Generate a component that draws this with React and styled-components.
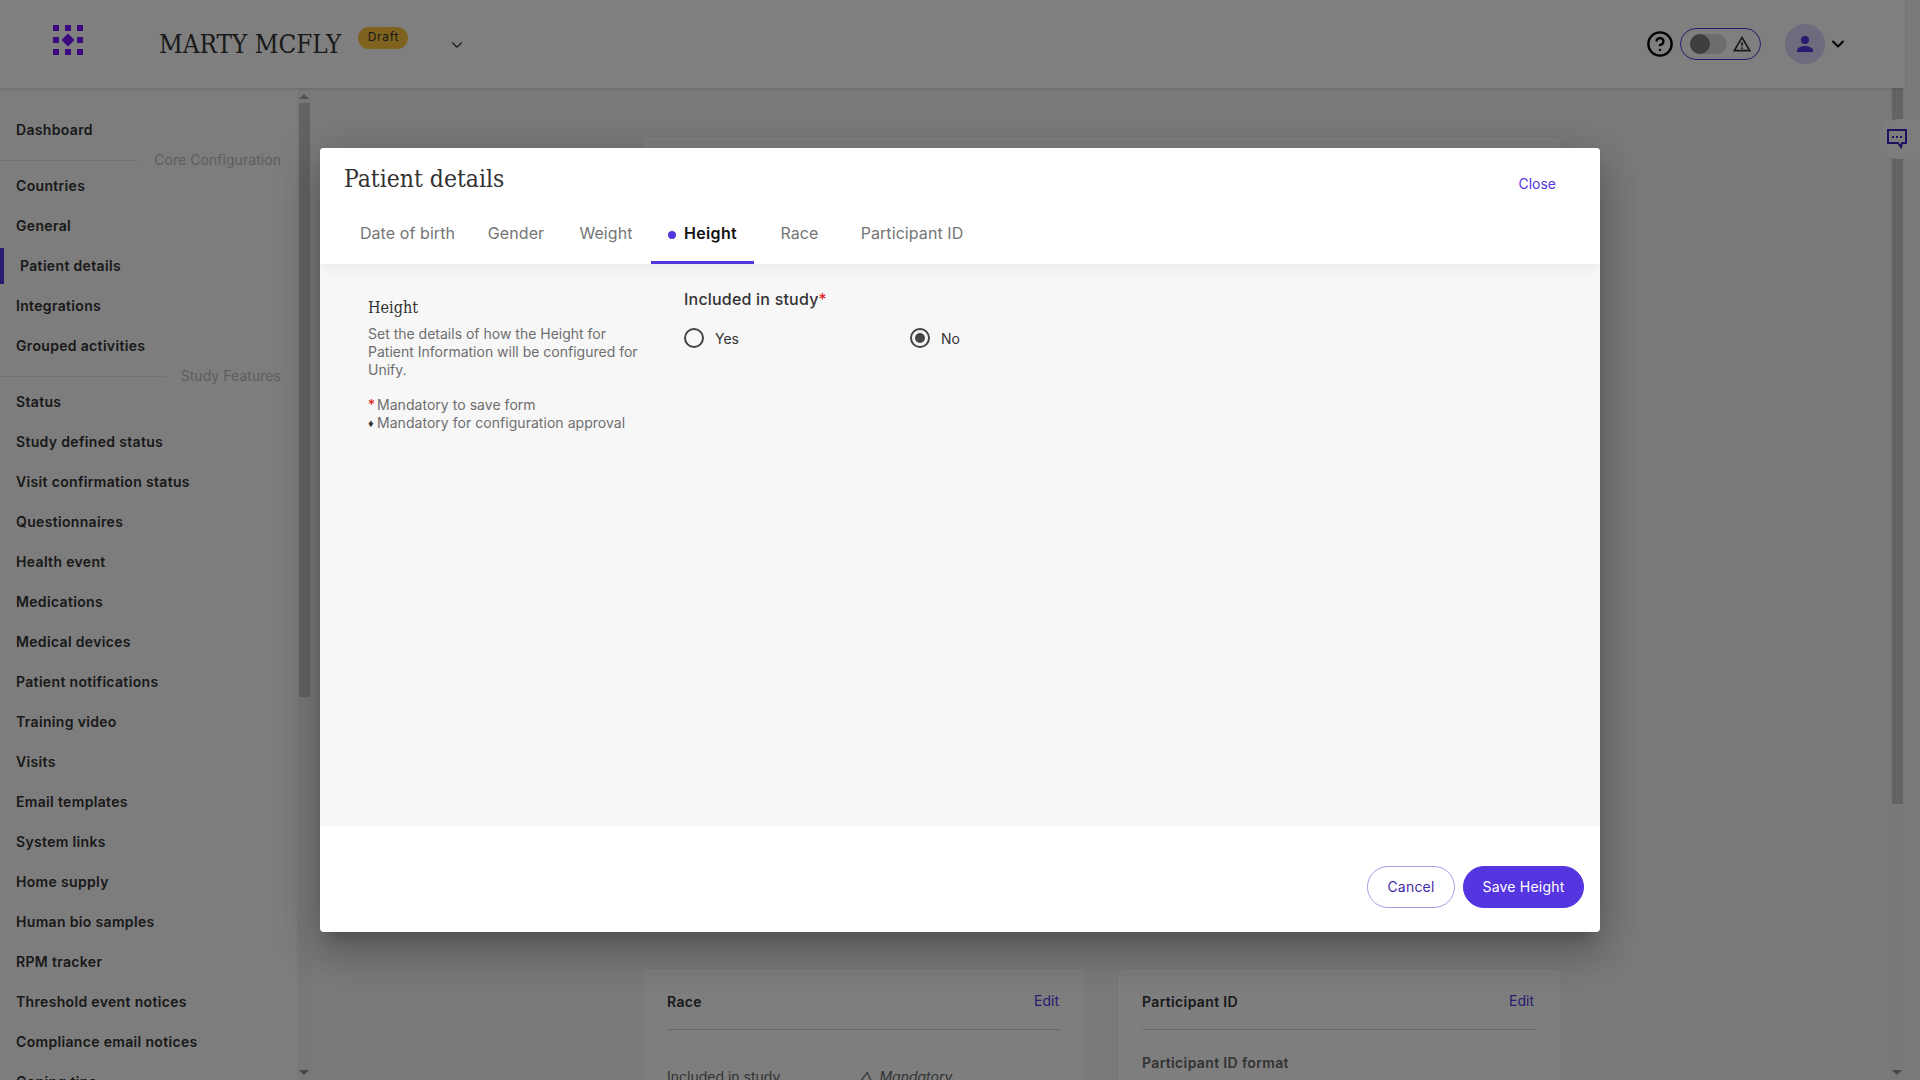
import React from 'react';
import styled, { createGlobalStyle } from 'styled-components';
import { ChevronDown, CircleHelp } from 'lucide-react';
import { MdOutlineWarningAmber } from 'react-icons/md';

const SANS = `Inter, "Liberation Sans", sans-serif`;
const SLAB = `"DejaVu Serif Condensed", "DejaVu Serif", serif`;
const ACCENT = '#5535e0';

const GlobalStyle = createGlobalStyle`
  html, body {
    margin: 0;
    padding: 0;
    height: 100%;
    overflow: hidden;
    font-family: ${SANS};
    color: #333;
  }
`;

const Page = styled.div`
  position: relative;
  width: 1920px;
  height: 1080px;
  overflow: hidden;
  background: #f5f5f5;
`;

const Frame = styled.div`
  width: 1905px;
  height: 100%;
  display: flex;
  flex-direction: column;
`;

const Header = styled.header`
  flex: 0 0 88px;
  display: flex;
  align-items: center;
  background: #fff;
  box-shadow: 0 1px 3px rgba(0, 0, 0, 0.12);
  padding: 0 57px 0 53px;
  box-sizing: border-box;
  position: relative;
  z-index: 1;
`;

const Logo = styled.svg`
  width: 30px;
  height: 30px;
  margin-top: -8px;
  flex: none;
`;

const StudyName = styled.h1`
  margin: 0 0 0 76px;
  font: 400 25.8px ${SLAB};
  color: #333;
  white-space: nowrap;
`;

const Badge = styled.span`
  margin: -12px 0 0 17px;
  width: 50px;
  height: 22px;
  border-radius: 11px;
  background: #ffc53d;
  font-size: 12px;
  line-height: 20px;
  letter-spacing: 0.7px;
  text-align: center;
  color: #333;
`;

const StudyChevron = styled(ChevronDown)`
  margin: 2px 0 0 40px;
  color: #333;
`;

const HeaderRight = styled.div`
  margin-left: auto;
  display: flex;
  align-items: center;
`;

const Pill = styled.div`
  margin-left: 6px;
  width: 81px;
  height: 32px;
  box-sizing: border-box;
  border: 1px solid ${ACCENT};
  border-radius: 16px;
  padding: 0 8px 0 9px;
  display: flex;
  align-items: center;
  justify-content: space-between;
`;

const Track = styled.div`
  width: 37px;
  height: 20px;
  border-radius: 10px;
  background: #d8dcd8;
  display: flex;
`;

const Knob = styled.div`
  width: 20px;
  height: 20px;
  border-radius: 50%;
  background: #7c7c7c;
`;

const Avatar = styled.div`
  margin-left: 24px;
  width: 40px;
  height: 40px;
  border-radius: 50%;
  background: #ddd6ff;
  display: flex;
  align-items: center;
  justify-content: center;
`;

const AvatarChevron = styled(ChevronDown)`
  margin-left: 3px;
  color: #000;
`;

const Body = styled.div`
  flex: 1;
  min-height: 0;
  display: flex;
`;

const Sidebar = styled.nav`
  width: 297px;
  flex: none;
  padding-top: 22px;
  overflow: hidden;
  background: #fafafa;
`;

const NavItem = styled.a`
  position: relative;
  display: block;
  height: 40px;
  line-height: 40px;
  padding-left: ${(p) => (p.$active ? 20 : 16)}px;
  font-size: 14px;
  font-weight: 600;
  letter-spacing: 0.33px;
  color: #333;
  white-space: nowrap;

  ${(p) =>
    p.$active &&
    `&::before {
      content: '';
      position: absolute;
      left: 0;
      top: 2px;
      bottom: 2px;
      width: 4px;
      background: ${ACCENT};
    }`}
`;

const NavGroup = styled.div`
  display: flex;
  align-items: center;
  gap: 16px;
  height: 16px;
  margin: 2px 0 -2px;
  padding-right: 16px;
  font-size: 14px;
  line-height: 16px;
  letter-spacing: 0.05px;
  color: #bdbdbd;
  white-space: nowrap;

  &::before {
    content: '';
    flex: 1;
    height: 1px;
    background: #e4e4e4;
  }
`;

const Rail = styled.div`
  width: ${(p) => p.$width}px;
  flex: none;
  display: flex;
  flex-direction: column;
  align-items: center;
  background: #f1f1f1;
`;

const RailArrow = styled.div`
  flex: none;
  width: 0;
  height: 0;
  border-left: 5px solid transparent;
  border-right: 5px solid transparent;
  margin: ${(p) => (p.$down ? 'auto 0 5px' : '6px 0 4px')};
  ${(p) =>
    p.$down ? 'border-top: 5px solid #8c8c8c;' : 'border-bottom: 5px solid #a4a4a4;'}
`;

const RailThumb = styled.div`
  flex: none;
  width: 11px;
  height: ${(p) => p.$height}px;
  background: #c6c6c6;
`;

const Main = styled.main`
  flex: 1;
  min-width: 0;
  padding: 49px 0 0 332px;
  overflow: hidden;
`;

const Column = styled.div`
  width: 917px;
  display: flex;
  flex-direction: column;
  gap: 34px;
`;

const Card = styled.section`
  box-sizing: border-box;
  background: #fcfcfc;
  border-radius: 4px;
  box-shadow: 0 0 2px rgba(0, 0, 0, 0.12);
  padding: 24px 24px 0;
  height: ${(p) => p.$height}px;
`;

const CardRow = styled.div`
  display: grid;
  grid-template-columns: 442px 442px;
  gap: 33px;
`;

const CardHead = styled.div`
  display: flex;
  justify-content: space-between;
  border-bottom: 1px solid #d4d4d4;
  height: 36px;
`;

const CardTitle = styled.h3`
  margin: 0;
  font-size: 14px;
  line-height: 18px;
  font-weight: 600;
  letter-spacing: 0.35px;
  color: #333;
`;

const EditLink = styled.a`
  margin-right: 2px;
  font-size: 14px;
  line-height: 16px;
  color: ${ACCENT};
`;

const CardLine = styled.div`
  margin-top: ${(p) => p.$top}px;
  display: flex;
  font-size: 14px;
  line-height: 18px;
  font-weight: ${(p) => (p.$strong ? 600 : 400)};
  letter-spacing: ${(p) => (p.$strong ? 0.35 : 0)}px;
  color: #666;
`;

const CardLineValue = styled.span`
  margin-left: 79px;
  font-style: italic;
  word-spacing: 2px;
`;

const Scrim = styled.div`
  position: absolute;
  inset: 0;
  z-index: 5;
  background: rgba(0, 0, 0, 0.5);
  display: flex;
  align-items: center;
  justify-content: center;
`;

const FeedbackTab = styled.div`
  position: absolute;
  z-index: 2;
  top: 119px;
  right: 0;
  width: 41px;
  height: 40px;
  border-radius: 20px 0 0 20px;
  background: #fbfbfb;
  display: flex;
  align-items: center;
  padding-left: 8px;
  box-sizing: border-box;
`;

const Modal = styled.div`
  width: 1280px;
  height: 784px;
  background: #fff;
  border-radius: 4px;
  overflow: hidden;
  display: flex;
  flex-direction: column;
  box-shadow: 0 11px 15px -7px rgba(0, 0, 0, 0.2), 0 24px 38px 3px rgba(0, 0, 0, 0.14),
    0 9px 46px 8px rgba(0, 0, 0, 0.12);
`;

const ModalHead = styled.div`
  flex: 0 0 116px;
  box-sizing: border-box;
  padding: 16px 44px 0 24px;
  display: flex;
  flex-direction: column;
  box-shadow: 0 4px 12px rgba(0, 0, 0, 0.06);
  position: relative;
  z-index: 1;
  background: #fff;
`;

const TitleRow = styled.div`
  display: flex;
  justify-content: space-between;
  align-items: flex-start;
`;

const ModalTitle = styled.h2`
  margin: 0;
  font: 400 24.5px/30px ${SLAB};
  color: #333;
`;

const CloseLink = styled.a`
  margin-top: 11px;
  font-size: 14px;
  line-height: 18px;
  color: ${ACCENT};
`;

const Tabs = styled.div`
  margin-top: 7px;
  flex: 1;
  display: flex;
`;

const Tab = styled.div`
  box-sizing: border-box;
  width: ${(p) => p.$width}px;
  margin-right: ${(p) => p.$gap}px;
  padding-top: 22px;
  display: flex;
  justify-content: center;
  gap: 8px;
  font-size: 16px;
  line-height: 20px;
  letter-spacing: ${(p) => (p.$active ? 0.35 : 0.08)}px;
  font-weight: ${(p) => (p.$active ? 600 : 400)};
  color: ${(p) => (p.$active ? '#111' : '#757575')};
  border-bottom: 3px solid ${(p) => (p.$active ? ACCENT : 'transparent')};
`;

const TabDot = styled.span`
  width: 8px;
  height: 8px;
  border-radius: 50%;
  background: ${ACCENT};
  margin-top: 8px;
`;

const ModalBody = styled.div`
  flex: 1;
  min-height: 0;
  background: #f7f7f7;
  display: flex;
  padding: 26px 0 0 48px;
`;

const Intro = styled.div`
  width: 316px;
  flex: none;
  padding-top: 9px;
  color: #6e6e6e;
  font-size: 14px;
  line-height: 18px;
`;

const IntroTitle = styled.h4`
  margin: 0 0 8px;
  font: 400 16px/18px ${SLAB};
  color: #333;
`;

const IntroText = styled.p`
  margin: 0 0 17px;
  width: 285px;
`;

const LegendRow = styled.div`
  display: flex;
  gap: 2px;
  letter-spacing: 0.04px;
`;

const Mark = styled.span`
  width: 7px;
  color: ${(p) => p.$color};
  font-size: ${(p) => p.$size}px;
`;

const FieldLabel = styled.div`
  font-size: 16px;
  line-height: 18px;
  font-weight: 500;
  letter-spacing: 0.2px;
  color: #333;
`;

const Required = styled.span`
  color: #e01010;
  font-weight: 400;
`;

const RadioRow = styled.div`
  margin-top: 20px;
  display: flex;
`;

const RadioOption = styled.label`
  width: 226px;
  display: flex;
  align-items: center;
  gap: 11px;
  font-size: 14px;
  color: #333;
`;

const RadioCircle = styled.span`
  width: 20px;
  height: 20px;
  box-sizing: border-box;
  border: 2px solid #444;
  border-radius: 50%;
  display: flex;
  align-items: center;
  justify-content: center;

  &::after {
    content: '';
    width: 10px;
    height: 10px;
    border-radius: 50%;
    background: ${(p) => (p.$checked ? '#444' : 'transparent')};
  }
`;

const ModalFoot = styled.div`
  flex: 0 0 106px;
  box-sizing: border-box;
  padding: 40px 16px 0 0;
  display: flex;
  justify-content: flex-end;
  gap: 8px;
`;

const Button = styled.button`
  height: 42px;
  width: ${(p) => p.$width}px;
  padding: 0 0 2px;
  border-radius: 21px;
  font: 400 14px ${SANS};
  letter-spacing: 0.2px;
  cursor: pointer;
  border: 1px solid ${(p) => (p.$primary ? ACCENT : '#a99ce0')};
  background: ${(p) => (p.$primary ? ACCENT : '#fff')};
  color: ${(p) => (p.$primary ? '#fff' : '#3f2ba6')};
`;

const coreItems = ['Countries', 'General', 'Patient details', 'Integrations', 'Grouped activities'];
const featureItems = [
  'Status',
  'Study defined status',
  'Visit confirmation status',
  'Questionnaires',
  'Health event',
  'Medications',
  'Medical devices',
  'Patient notifications',
  'Training video',
  'Visits',
  'Email templates',
  'System links',
  'Home supply',
  'Human bio samples',
  'RPM tracker',
  'Threshold event notices',
  'Compliance email notices',
  'Coping tips',
];

const tabs = [
  { label: 'Date of birth', width: 127, gap: 1 },
  { label: 'Gender', width: 88, gap: 4 },
  { label: 'Weight', width: 84, gap: 3 },
  { label: 'Height', width: 103, gap: 10, active: true },
  { label: 'Race', width: 71, gap: 9 },
  { label: 'Participant ID', width: 136, gap: 0 },
];

function LogoMark() {
  const cells = [0, 12, 24];
  return (
    <Logo viewBox="0 0 30 30">
      {cells.map((y) =>
        cells.map((x) =>
          x === 12 && y === 12 ? null : (
            <rect key={`${x}-${y}`} x={x} y={y} width="6" height="6" fill="#7414ff" />
          ),
        ),
      )}
      <polygon points="15,8.5 21.5,15 15,21.5 8.5,15" fill="#7414ff" />
    </Logo>
  );
}

function PersonIcon() {
  return (
    <svg width="18" height="18" viewBox="0 0 18 18" fill={ACCENT}>
      <circle cx="9" cy="5" r="4" />
      <path d="M1 17v-1.5C1 12.6 5.5 11 9 11s8 1.6 8 4.5V17z" />
    </svg>
  );
}

function ChatIcon() {
  return (
    <svg width="20" height="20" viewBox="0 0 20 20" fill="none">
      <path d="M1 1h18v13h-4l-1 4-3-4H1z" stroke="#3a24c0" strokeWidth="2" />
      <rect x="5" y="7" width="2" height="2" fill="#3a24c0" />
      <rect x="9" y="7" width="2" height="2" fill="#3a24c0" />
      <rect x="13" y="7" width="2" height="2" fill="#3a24c0" />
    </svg>
  );
}

function Scrollbar({ width, thumb, topArrow }) {
  return (
    <Rail $width={width}>
      {topArrow && <RailArrow />}
      <RailThumb $height={thumb} />
      <RailArrow $down />
    </Rail>
  );
}

export default function App() {
  return (
    <Page>
      <GlobalStyle />
      <Frame>
        <Header>
          <LogoMark />
          <StudyName>MARTY MCFLY</StudyName>
          <Badge>Draft</Badge>
          <StudyChevron size={18} strokeWidth={1.5} />
          <HeaderRight>
            <CircleHelp size={28} strokeWidth={2} color="#000" />
            <Pill>
              <Track>
                <Knob />
              </Track>
              <MdOutlineWarningAmber size={20} color="#333" />
            </Pill>
            <Avatar>
              <PersonIcon />
            </Avatar>
            <AvatarChevron size={20} strokeWidth={2.2} />
          </HeaderRight>
        </Header>
        <Body>
          <Sidebar>
            <NavItem>Dashboard</NavItem>
            <NavGroup>Core Configuration</NavGroup>
            {coreItems.map((v) => (
              <NavItem key={v} $active={v === 'Patient details'}>
                {v}
              </NavItem>
            ))}
            <NavGroup>Study Features</NavGroup>
            {featureItems.map((v) => (
              <NavItem key={v}>{v}</NavItem>
            ))}
          </Sidebar>
          <Scrollbar width={14} thumb={594} topArrow />
          <Main>
            <Column>
              <Card $height={798} />
              <CardRow>
                <Card $height={300}>
                  <CardHead>
                    <CardTitle>Race</CardTitle>
                    <EditLink>Edit</EditLink>
                  </CardHead>
                  <CardLine $top={38}>
                    Included in study
                    <CardLineValue>△ Mandatory</CardLineValue>
                  </CardLine>
                </Card>
                <Card $height={300}>
                  <CardHead>
                    <CardTitle>Participant ID</CardTitle>
                    <EditLink>Edit</EditLink>
                  </CardHead>
                  <CardLine $top={24} $strong>
                    Participant ID format
                  </CardLine>
                </Card>
              </CardRow>
            </Column>
          </Main>
          <Scrollbar width={16} thumb={716} />
        </Body>
      </Frame>
      <FeedbackTab>
        <ChatIcon />
      </FeedbackTab>
      <Scrim>
        <Modal>
          <ModalHead>
            <TitleRow>
              <ModalTitle>Patient details</ModalTitle>
              <CloseLink>Close</CloseLink>
            </TitleRow>
            <Tabs>
              {tabs.map((t) => (
                <Tab key={t.label} $width={t.width} $gap={t.gap} $active={t.active}>
                  {t.active && <TabDot />}
                  {t.label}
                </Tab>
              ))}
            </Tabs>
          </ModalHead>
          <ModalBody>
            <Intro>
              <IntroTitle>Height</IntroTitle>
              <IntroText>
                Set the details of how the Height for Patient Information will be configured for
                Unify.
              </IntroText>
              <LegendRow>
                <Mark $color="#e01010" $size={14}>
                  *
                </Mark>
                Mandatory to save form
              </LegendRow>
              <LegendRow>
                <Mark $color="#333" $size={11}>
                  ♦
                </Mark>
                Mandatory for configuration approval
              </LegendRow>
            </Intro>
            <div>
              <FieldLabel>
                Included in study<Required>*</Required>
              </FieldLabel>
              <RadioRow>
                <RadioOption>
                  <RadioCircle />
                  Yes
                </RadioOption>
                <RadioOption>
                  <RadioCircle $checked />
                  No
                </RadioOption>
              </RadioRow>
            </div>
          </ModalBody>
          <ModalFoot>
            <Button $width={88}>Cancel</Button>
            <Button $width={121} $primary>
              Save Height
            </Button>
          </ModalFoot>
        </Modal>
      </Scrim>
    </Page>
  );
}
